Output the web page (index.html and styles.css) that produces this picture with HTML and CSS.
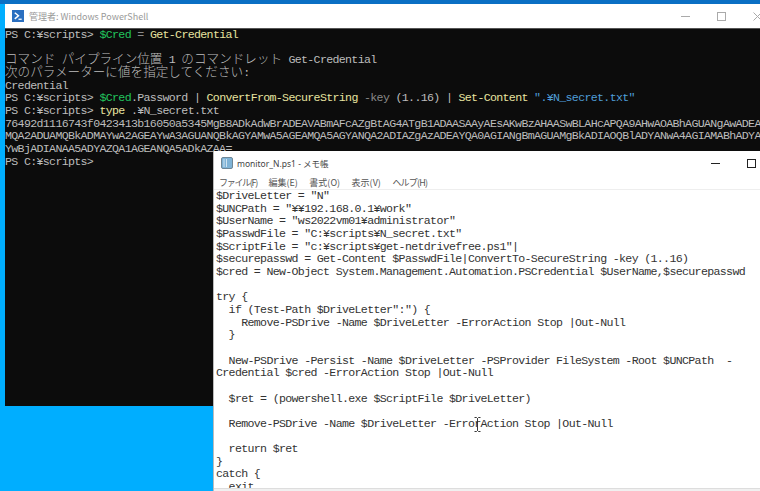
FILE: index.html
```html
<!DOCTYPE html>
<html lang="ja">
<head>
<meta charset="utf-8">
<title>PowerShell and Notepad</title>
<link rel="stylesheet" href="styles.css">
</head>
<body>
<div class="desktop">
  <section class="window ps">
    <header class="ps-title">
      <svg class="ps-icon" width="12" height="12" viewBox="0 0 13 13"><rect width="13" height="13" fill="#2a6fc0"/><path d="M3 3l4 3.2-4 3.4" fill="none" stroke="#fff" stroke-width="1.6"/><path d="M7 10h3.5" stroke="#fff" stroke-width="1.4"/></svg>
      <span class="ps-name">管理者: Windows PowerShell</span>
      <span class="controls ps-controls">
        <svg width="9" height="9" viewBox="0 0 9 9"><path d="M0 4.5h9" stroke="#aaa"/></svg>
        <svg width="9" height="9" viewBox="0 0 9 9"><rect x=".5" y=".5" width="8" height="8" fill="none" stroke="#aaa"/></svg>
        <svg width="9" height="9" viewBox="0 0 9 9"><path d="M.5.5l8 8M8.5.5l-8 8" stroke="#aaa"/></svg>
      </span>
    </header>
    <pre class="console">PS C:¥scripts&gt; <span class="y">$Cred</span> <span class="g">=</span> <span class="l">Get-Credential</span>

<span class="jp">コマンド</span> <span class="jp">パイプライン位置</span> 1 <span class="jp">のコマンドレット</span> Get-Credential
<span class="jp">次のパラメーターに値を指定してください</span>:
Credential
PS C:¥scripts&gt; <span class="y">$Cred</span>.Password | <span class="l">ConvertFrom-SecureString</span> <span class="g">-key</span> (1..16) | <span class="l">Set-Content</span> <span class="b">".¥N_secret.txt"</span>
PS C:¥scripts&gt; <span class="l">type</span> .¥N_secret.txt
76492d1116743f0423413b16050a5345MgB8ADkAdwBrADEAVABmAFcAZgBtAG4ATgB1ADAASAAyAEsAKwBzAHAASwBLAHcAPQA9AHwAOABhAGUANgAwADEA
MQA2ADUAMQBkADMAYwA2AGEAYwA3AGUANQBkAGYAMwA5AGEAMQA5AGYANQA2ADIAZgAzADEAYQA0AGIANgBmAGUAMgBkADIAOQBlADYANwA4AGIAMABhADYA
YwBjADIANAA5ADYAZQA1AGEANQA5ADkAZAA=
PS C:¥scripts&gt;</pre>
  </section>
  <section class="window np">
    <header class="np-title">
      <svg class="np-icon" width="12" height="12" viewBox="0 0 12 12"><rect x=".5" y=".5" width="11" height="11" rx="1.5" fill="#7fb3d6" stroke="#6f8796"/><path d="M3 2v8M5.5 2v8" stroke="#cfe3f0"/></svg>
      <span class="np-name">monitor_N.ps1 - <span class="np-jp">メモ帳</span></span>
      <span class="controls np-controls">
        <svg width="9" height="9" viewBox="0 0 9 9"><path d="M0 4.5h9" stroke="#222"/></svg>
        <svg width="9" height="9" viewBox="0 0 9 9"><rect x=".5" y=".5" width="8" height="8" fill="none" stroke="#222"/></svg>
      </span>
    </header>
    <nav class="menu"><span class="tight-more">ファイル(F)</span><span>編集(E)</span><span>書式(O)</span><span>表示(V)</span><span class="tight">ヘルプ(H)</span></nav>
    <pre class="editor">$DriveLetter = "N"
$UNCPath = "¥¥192.168.0.1¥work"
$UserName = "ws2022vm01¥administrator"
$PasswdFile = "C:¥scripts¥N_secret.txt"
$ScriptFile = "c:¥scripts¥get-netdrivefree.ps1"|
$securepasswd = Get-Content $PasswdFile|ConvertTo-SecureString -key (1..16)
$cred = New-Object System.Management.Automation.PSCredential $UserName,$securepasswd

try {
  if (Test-Path $DriveLetter":") {
    Remove-PSDrive -Name $DriveLetter -ErrorAction Stop |Out-Null
  }

  New-PSDrive -Persist -Name $DriveLetter -PSProvider FileSystem -Root $UNCPath  -
Credential $cred -ErrorAction Stop |Out-Null

  $ret = (powershell.exe $ScriptFile $DriveLetter)

  Remove-PSDrive -Name $DriveLetter -ErrorAction Stop |Out-Null

  return $ret
}
catch {
  exit
}</pre>
    <div class="status"></div>
  </section>
  <svg class="ibeam" width="7" height="15" viewBox="0 0 7 15"><path d="M.5.5h2l1 1 1-1h2M3.5 1.5v12M.5 14.5h2l1-1 1 1h2" fill="none" stroke="#222" stroke-width=".9"/></svg>
</div>
</body>
</html>
```
FILE: styles.css
```css
html, body { margin: 0; padding: 0; }
body { width: 760px; height: 491px; overflow: hidden; }
.desktop { position: relative; width: 760px; height: 491px; overflow: hidden;
  background: linear-gradient(180deg, #0a6fc4 0, #0a6fc4 4px, #00aeff 4px, #00aeff 100%); }
.window { position: absolute; display: flex; flex-direction: column; overflow: hidden; }
.ps { left: 5px; top: 4px; width: 755px; height: 402px; background: #0c0c0c; }
.ps-title { flex: none; background: #fff; display: flex; align-items: center; padding-left: 7px; border-bottom: 1px solid #555; box-sizing: border-box; height: 25px; }
.ps-name { margin-left: 5px; font: 9px "Noto Sans CJK JP", "Noto Sans", sans-serif; color: #999; }
.controls { margin-left: auto; display: flex; }
.ps-controls { gap: 27px; margin-right: -2px; }
.console, .editor { margin: 0; font-family: "Liberation Mono", "Noto Sans CJK JP", monospace; font-size: 11.6px; letter-spacing: -0.66px; line-height: 12.65px; overflow: hidden; white-space: pre; }
.console { color: #bdbdbd; }
.jp { font-family: "Noto Sans CJK JP", sans-serif; font-size: 12.6px; line-height: 0; letter-spacing: 0; font-weight: 300; }
.y { color: #22c55e; }
.g { color: #8a8a8a; }
.l { color: #e8e4a0; }
.b { color: #4f9ed8; }
.np { left: 214px; top: 151px; width: 546px; height: 340px; background: #fff; box-shadow: -1px 0 0 #bbb; }
.np-title { flex: none; height: 24px; display: flex; align-items: center; padding-left: 7px; }
.np-name { margin-left: 4px; font: 8.5px "Noto Sans", sans-serif; color: #444; }
.np-jp { font-family: "Noto Sans CJK JP", sans-serif; }
.np-controls { gap: 27px; margin-right: 4px; }
.menu { flex: none; height: 15px; display: flex; align-items: center; gap: 11.5px; padding-left: 5px; font: 9px "Noto Sans CJK JP", sans-serif; color: #555; border-bottom: 1px solid #eee; box-sizing: border-box; }
.tight-more { letter-spacing: -1.3px; }
.tight { letter-spacing: -0.8px; }
.editor { padding: 0 0 0 2px; color: #333; flex: 1; min-height: 0; }
.status { flex: none; height: 3px; background: #f0f0f0; border-top: 1px solid #ddd; box-sizing: border-box; }
.ibeam { position: absolute; left: 474px; top: 417px; }
```
